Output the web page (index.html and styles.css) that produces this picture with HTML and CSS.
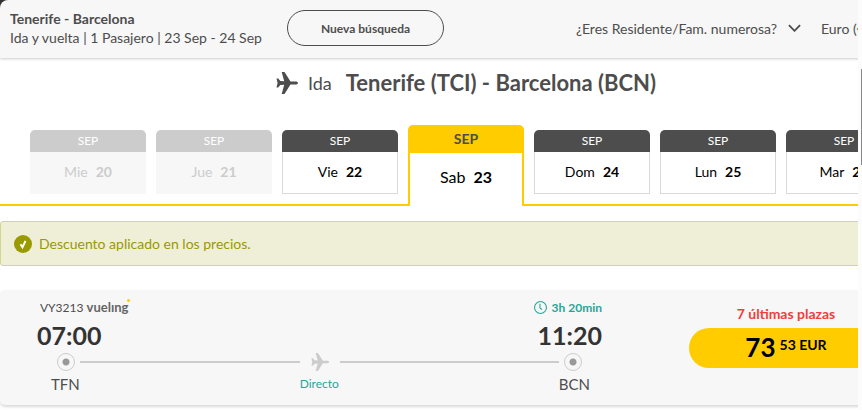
FILE: index.html
```
<!DOCTYPE html>
<html lang="es">
<head>
    <meta charset="UTF-8">
    <meta name="viewport" content="width=device-width, initial-scale=1.0">
    <title>Tenerife - Barcelona</title>
    <link rel="stylesheet" href="styles.css">
</head>
<body>
    <!-- plane shape shared by the title and the route line -->
    <svg class="sprite" aria-hidden="true">
        <symbol id="plane" viewBox="0 0 22 22">
            <path d="M22 11c0-.9-1-1.500-2.500-1.500h-5L8.500 0H5.700l2.500 9.300L4.300 9 2.200 6.500H.5L1.600 11 .5 15.500h1.700L4.300 13l3.900-.3L5.700 22h2.800l6-9.500h5c1.500 0 2.500-.6 2.500-1.500z"/>
        </symbol>
    </svg>

    <div class="viewport">
        <div class="page">
            <header class="topbar">
                <div class="trip">
                    <strong>Tenerife - Barcelona</strong>
                    <span>Ida y vuelta | 1 Pasajero | 23 Sep - 24 Sep</span>
                </div>
                <button type="button" class="new-search">Nueva búsqueda</button>
                <div class="options">
                    <button type="button" class="resident">
                        ¿Eres Residente/Fam. numerosa?
                        <svg class="chevron" viewBox="0 0 14 8"><path d="M1 1l6 6 6-6"/></svg>
                    </button>
                    <select class="currency" aria-label="Moneda">
                        <option>Euro (€)</option>
                    </select>
                </div>
            </header>

            <main>
                <h1 class="title">
                    <svg class="title-plane"><use href="#plane"/></svg>
                    <span class="title-way">Ida</span>
                    <span>Tenerife (TCI) - Barcelona (BCN)</span>
                </h1>

                <nav class="days">
                    <button type="button" class="day" disabled>
                        <span class="day-month">SEP</span>
                        <span class="day-date">Mie <b>20</b></span>
                    </button>
                    <button type="button" class="day" disabled>
                        <span class="day-month">SEP</span>
                        <span class="day-date">Jue <b>21</b></span>
                    </button>
                    <button type="button" class="day">
                        <span class="day-month">SEP</span>
                        <span class="day-date">Vie <b>22</b></span>
                    </button>
                    <button type="button" class="day selected" aria-current="date">
                        <span class="day-month">SEP</span>
                        <span class="day-date">Sab <b>23</b></span>
                    </button>
                    <button type="button" class="day">
                        <span class="day-month">SEP</span>
                        <span class="day-date">Dom <b>24</b></span>
                    </button>
                    <button type="button" class="day">
                        <span class="day-month">SEP</span>
                        <span class="day-date">Lun <b>25</b></span>
                    </button>
                    <button type="button" class="day">
                        <span class="day-month">SEP</span>
                        <span class="day-date">Mar <b>26</b></span>
                    </button>
                </nav>

                <div class="notice">
                    <svg class="notice-icon" viewBox="0 0 18 18">
                        <circle cx="9" cy="9" r="9"/>
                        <path d="M6.500 9.200l2 3.100 3-6.500"/>
                    </svg>
                    Descuento aplicado en los precios.
                </div>

                <section class="flight">
                    <div class="journey">
                        <div class="row info">
                            <span class="flight-number">VY3213 <b class="airline">vuelıng</b></span>
                            <span class="duration">
                                <svg class="clock" viewBox="0 0 12 12"><circle cx="6" cy="6" r="5.500"/><path d="M5.500 2.500v4l2 1.500"/></svg>
                                3h 20min
                            </span>
                        </div>
                        <div class="row times">
                            <time>07:00</time>
                            <time>11:20</time>
                        </div>
                        <div class="row track">
                            <span class="stop"></span>
                            <span class="line"></span>
                            <svg class="track-plane"><use href="#plane"/></svg>
                            <span class="line"></span>
                            <span class="stop"></span>
                        </div>
                        <div class="row airports">
                            <span>TFN</span>
                            <span class="direct">Directo</span>
                            <span>BCN</span>
                        </div>
                    </div>
                    <div class="fare">
                        <span class="seats">7 últimas plazas</span>
                        <button type="button" class="price">73 <span class="cents">53 EUR</span></button>
                    </div>
                </section>
            </main>
        </div>
    </div>
    <div class="gutter"><div class="thumb"></div></div>
</body>
</html>
```
FILE: styles.css
```
:root {
    --yellow: #ffcc00;
    --dark: #4d4d4d;
    --grey: #cccccc;
    --light: #f7f7f7;
    --olive: #999900;
    --teal: #26a699;
}

* {
    box-sizing: border-box;
}

body {
    margin: 0;
    min-height: 100vh;
    display: flex;
    overflow: hidden;
    background: #fff;
    color: var(--dark);
    font: 14px/19px Lato, "Liberation Sans", sans-serif;
}

button,
select {
    font: inherit;
    color: inherit;
    background: none;
    border: 0;
    padding: 0;
    white-space: nowrap;
    cursor: pointer;
}

.sprite {
    position: absolute;
    width: 0;
    height: 0;
}

.viewport {
    flex: 1;
    min-width: 0;
    overflow: hidden;
    background: linear-gradient(#333 10px, #fff 10px);
}

/* the results are wider than the area that shows them */
.page {
    margin-right: -74px;
}

.topbar {
    display: flex;
    align-items: center;
    height: 58px;
    padding: 0 10px 2px;
    background: var(--light);
    border-radius: 8px 0 0 0;
    box-shadow: 0 1px 3px rgba(0, 0, 0, 0.2);
    white-space: nowrap;
}

.trip {
    display: flex;
    flex-direction: column;
    width: 277px;
}

.new-search {
    width: 157px;
    height: 36px;
    border: 1px solid var(--dark);
    border-radius: 18px;
    font-size: 12px;
    font-weight: 700;
}

.options {
    display: flex;
    gap: 20px;
    margin-left: auto;
}

.resident {
    display: flex;
    align-items: center;
    gap: 11px;
}

.chevron {
    width: 13px;
    height: 8px;
    fill: none;
    stroke: var(--dark);
    stroke-width: 2;
}

.currency {
    width: 101px;
    appearance: none;
}

.title {
    display: flex;
    justify-content: center;
    align-items: center;
    margin: 0;
    padding: 11px 0 28px;
    font-size: 22px;
    line-height: 28px;
}

.title-plane {
    width: 22px;
    height: 22px;
    margin-right: 10px;
    fill: var(--dark);
}

.title-way {
    margin-right: 14px;
    font-size: 18px;
    font-weight: 400;
}

.days {
    display: flex;
    gap: 10px;
    height: 81px;
    padding-left: 30px;
    border-bottom: 2px solid var(--yellow);
}

.day {
    display: flex;
    flex-direction: column;
    flex: 0 0 116px;
    height: 64px;
    margin-top: 5px;
    color: #000;
}

.day-month {
    width: 100%;
    border-radius: 5px 5px 0 0;
    background: var(--dark);
    color: #fff;
    font-size: 12px;
    line-height: 22px;
}

.day-date {
    flex: 1;
    display: flex;
    justify-content: center;
    align-items: center;
    gap: 8px;
    width: 100%;
    padding-bottom: 2px;
    border: 1px solid #d9d9d9;
    border-top: 0;
}

.day:disabled {
    color: var(--grey);
    cursor: default;
}

.day:disabled .day-month {
    background: var(--grey);
}

.day:disabled .day-date {
    border-color: var(--light);
    background: var(--light);
}

.day.selected {
    height: 81px;
    margin-top: 0;
    font-size: 16px;
}

.selected .day-month {
    background: var(--yellow);
    color: var(--dark);
    font-size: 14px;
    font-weight: 700;
    line-height: 28px;
}

.selected .day-date {
    padding-bottom: 6px;
    border: solid var(--yellow);
    border-width: 0 2px;
    background: #fff;
}

.notice {
    display: flex;
    align-items: center;
    gap: 7px;
    height: 45px;
    margin-top: 15px;
    padding-left: 13px;
    border: 1px solid #d3d68f;
    border-radius: 3px;
    background: #efefd8;
    color: var(--olive);
}

.notice-icon {
    width: 18px;
    height: 18px;
    fill: var(--olive);
}

.notice-icon path {
    fill: none;
    stroke: #fff;
    stroke-width: 2;
}

.flight {
    display: flex;
    justify-content: space-between;
    margin-top: 24px;
    padding: 7px 49px 10px 37px;
    border-radius: 5px;
    background: var(--light);
    box-shadow: 0 2px 3px rgba(0, 0, 0, 0.15);
}

.journey {
    flex: 0 1 565px;
}

.row {
    display: flex;
    justify-content: space-between;
    align-items: center;
}

.info {
    padding-left: 3px;
    font-size: 12px;
    line-height: 20px;
}

.airline {
    position: relative;
    color: #666;
    font-size: 13px;
}

/* yellow dot of the airline logo */
.airline::after {
    content: "";
    position: absolute;
    top: 0;
    right: -2px;
    width: 3px;
    height: 3px;
    border-radius: 50%;
    background: var(--yellow);
}

.duration {
    display: flex;
    align-items: center;
    gap: 5px;
    color: var(--teal);
    font-weight: 700;
}

.clock {
    width: 13px;
    height: 13px;
    fill: none;
    stroke: var(--teal);
}

.times {
    color: #333;
    font-size: 25px;
    font-weight: 700;
    line-height: 35px;
}

.track {
    gap: 5px;
    padding: 0 20px;
}

.stop {
    width: 18px;
    height: 18px;
    border: 1px solid var(--grey);
    border-radius: 50%;
    background: radial-gradient(circle, #999 3px, transparent 4px);
}

.line {
    flex: 1;
    height: 2px;
    background: var(--grey);
}

.track-plane {
    width: 18px;
    height: 18px;
    margin: 0 6px;
    fill: var(--grey);
}

.airports {
    padding: 2px 12px 0 14px;
    font-size: 15px;
    line-height: 22px;
}

.direct {
    color: var(--teal);
    font-size: 12px;
}

.fare {
    display: flex;
    flex-direction: column;
    width: 194px;
    padding-top: 7px;
    text-align: center;
}

.seats {
    margin-bottom: 5px;
    color: #f23d3d;
    font-weight: 700;
}

.price {
    display: flex;
    justify-content: center;
    gap: 4px;
    height: 40px;
    border-radius: 20px;
    background: var(--yellow);
    color: #000;
    font-size: 26px;
    font-weight: 700;
    line-height: 38px;
}

.cents {
    font-size: 14px;
    line-height: 34px;
}

.gutter {
    flex: 0 0 4px;
    padding: 69px 0 0 3px;
    background: #fcfcfc;
}

.thumb {
    height: 96px;
    background: #888;
}
```
